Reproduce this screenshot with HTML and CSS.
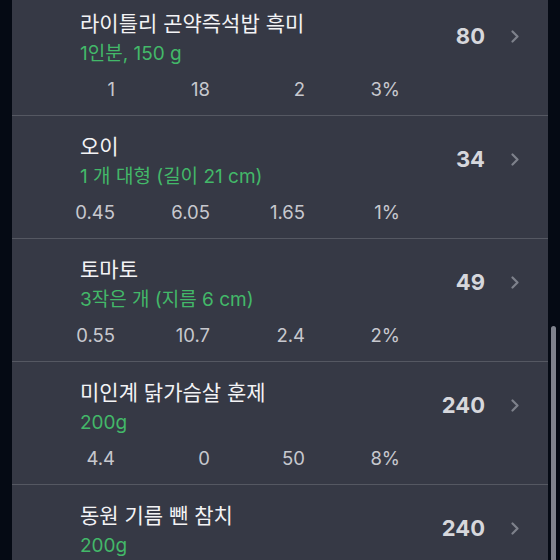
FILE: index.html
```html
<!DOCTYPE html>
<html lang="ko">
<head>
<meta charset="utf-8">
<link rel="stylesheet" href="styles.css">
</head>
<body>
<div class="screen">
  <div class="panel">
    <div class="list">
      <div class="row">
        <div class="top">
          <div class="names">
            <div class="title">라이틀리 곤약즉석밥 흑미</div>
            <div class="portion">1인분, 150 g</div>
          </div>
          <div class="kcal">80</div>
          <svg class="chev" width="8" height="13" viewBox="0 0 8 13"><polyline points="1.5,1.5 6.5,6.5 1.5,11.5" fill="none" stroke="#7e818b" stroke-width="2.2" stroke-linecap="round" stroke-linejoin="round"/></svg>
        </div>
        <div class="macros"><span>1</span><span>18</span><span>2</span><span>3%</span></div>
      </div>
      <div class="row">
        <div class="top">
          <div class="names">
            <div class="title">오이</div>
            <div class="portion">1 개 대형 (길이 21 cm)</div>
          </div>
          <div class="kcal">34</div>
          <svg class="chev" width="8" height="13" viewBox="0 0 8 13"><polyline points="1.5,1.5 6.5,6.5 1.5,11.5" fill="none" stroke="#7e818b" stroke-width="2.2" stroke-linecap="round" stroke-linejoin="round"/></svg>
        </div>
        <div class="macros"><span>0.45</span><span>6.05</span><span>1.65</span><span>1%</span></div>
      </div>
      <div class="row">
        <div class="top">
          <div class="names">
            <div class="title">토마토</div>
            <div class="portion">3작은 개 (지름 6 cm)</div>
          </div>
          <div class="kcal">49</div>
          <svg class="chev" width="8" height="13" viewBox="0 0 8 13"><polyline points="1.5,1.5 6.5,6.5 1.5,11.5" fill="none" stroke="#7e818b" stroke-width="2.2" stroke-linecap="round" stroke-linejoin="round"/></svg>
        </div>
        <div class="macros"><span>0.55</span><span>10.7</span><span>2.4</span><span>2%</span></div>
      </div>
      <div class="row">
        <div class="top">
          <div class="names">
            <div class="title">미인계 닭가슴살 훈제</div>
            <div class="portion">200g</div>
          </div>
          <div class="kcal">240</div>
          <svg class="chev" width="8" height="13" viewBox="0 0 8 13"><polyline points="1.5,1.5 6.5,6.5 1.5,11.5" fill="none" stroke="#7e818b" stroke-width="2.2" stroke-linecap="round" stroke-linejoin="round"/></svg>
        </div>
        <div class="macros"><span>4.4</span><span>0</span><span>50</span><span>8%</span></div>
      </div>
      <div class="row">
        <div class="top">
          <div class="names">
            <div class="title">동원 기름 뺀 참치</div>
            <div class="portion">200g</div>
          </div>
          <div class="kcal">240</div>
          <svg class="chev" width="8" height="13" viewBox="0 0 8 13"><polyline points="1.5,1.5 6.5,6.5 1.5,11.5" fill="none" stroke="#7e818b" stroke-width="2.2" stroke-linecap="round" stroke-linejoin="round"/></svg>
        </div>
      </div>
    </div>
  </div>
  <div class="scrollbar"></div>
</div>
</body>
</html>
```
FILE: styles.css
```css
html, body {
  margin: 0;
  padding: 0;
  background: #050a14;
}
body {
  font-family: Inter, "Noto Sans CJK KR", sans-serif;
}
.screen {
  position: relative;
  width: 560px;
  height: 560px;
  overflow: hidden;
  display: flex;
  padding-left: 12px;
  box-sizing: border-box;
}
.panel {
  width: 536px;
  height: 560px;
  background: #363945;
  overflow: hidden;
}
.list {
  margin-top: -7px;
}
.row {
  height: 123px;
  box-sizing: border-box;
  border-bottom: 1.5px solid #555862;
  padding-top: 15px;
  display: flex;
  flex-direction: column;
}
.top {
  display: flex;
  align-items: flex-start;
}
.names {
  flex: 1;
  padding-left: 68px;
}
.title {
  font-size: 21px;
  line-height: 28px;
  color: #f3f3f5;
  font-family: "Noto Sans CJK KR", sans-serif;
}
.portion {
  font-size: 19px;
  line-height: 36px;
  color: #43b869;
}
.kcal {
  margin-top: 14px;
  font-size: 22px;
  line-height: 28px;
  font-weight: 700;
  color: #d6d7dc;
}
.chev {
  margin-top: 22px;
  margin-left: 26px;
  margin-right: 29px;
}
.macros {
  display: grid;
  grid-template-columns: repeat(4, 95px);
  margin-left: 8px;
  font-size: 18.5px;
  line-height: 34px;
  color: #c7c8ce;
}
.macros span {
  text-align: right;
}
.scrollbar {
  position: absolute;
  left: 551px;
  top: 326px;
  width: 5px;
  height: 240px;
  border-radius: 3px;
  background: #7f828d;
}
```
